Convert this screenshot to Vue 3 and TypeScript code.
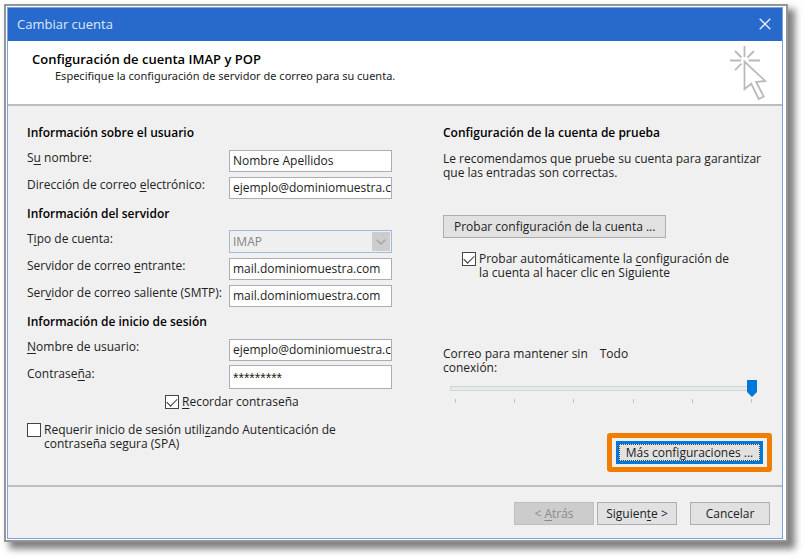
<script setup lang="ts">
import { ref } from 'vue'

const fullName = ref('Nombre Apellidos')
const email = ref('ejemplo@dominiomuestra.com')
const incoming = ref('mail.dominiomuestra.com')
const outgoing = ref('mail.dominiomuestra.com')
const userName = ref('ejemplo@dominiomuestra.com')
const password = ref('*********')
const remember = ref(true)
const requireSpa = ref(false)
const autoTest = ref(true)
const keepOffline = ref(5)
</script>

<template>
  <main class="frame">
    <form class="dialog" @submit.prevent>
      <header class="titlebar">
        <h1>Cambiar cuenta</h1>
        <button type="button" class="close" aria-label="Cerrar">
          <svg viewBox="0 0 12 12" width="12" height="12"><path d="M.7.7 11.3 11.3M11.3.7.7 11.3" fill="none" stroke="#e4ecf8" stroke-width="1.4" /></svg>
        </button>
      </header>

      <div class="banner">
        <div class="banner-text">
          <h2>Configuración de cuenta IMAP y POP</h2>
          <p>Especifique la configuración de servidor de correo para su cuenta.</p>
        </div>
        <svg class="pointer" viewBox="0 0 38 56" width="38" height="56" fill="none" stroke="#b9b9b9" stroke-width="1.8">
          <path d="M14.500 0v11M0 14.500h11M18.500 14.500h11.500M5 5l6.500 6.500M24 5l-6.500 6.500M5 24.200l6.500-6.500" />
          <path d="M14.500 15.500v27.700l6.700-5.500 7.500 15.300 5-2.500-7.500-14.500 9-1z" fill="#fff" />
        </svg>
      </div>

      <div class="content">
        <section class="fields">
          <h3>Información sobre el usuario</h3>
          <label for="name">S<u>u</u> nombre:</label>
          <input id="name" v-model="fullName" type="text" />
          <label for="email">Dirección de correo <u>e</u>lectrónico:</label>
          <input id="email" v-model="email" type="text" />

          <h3>Información del servidor</h3>
          <label for="kind">T<u>i</u>po de cuenta:</label>
          <div class="picker">
            <select id="kind" disabled><option>IMAP</option></select>
            <span class="arrow">
              <svg viewBox="0 0 10 6" width="10" height="6"><path d="M.7.7 5 5 9.300.7" fill="none" stroke="#a3a3a3" stroke-width="1.3" /></svg>
            </span>
          </div>
          <label for="incoming">Servidor de correo <u>e</u>ntrante:</label>
          <input id="incoming" v-model="incoming" type="text" />
          <label for="outgoing">Ser<u>v</u>idor de correo saliente (SMTP):</label>
          <input id="outgoing" v-model="outgoing" type="text" />

          <h3>Información de inicio de sesión</h3>
          <label for="user"><u>N</u>ombre de usuario:</label>
          <input id="user" v-model="userName" type="text" />
          <label for="password">Contrase<u>ñ</u>a:</label>
          <input id="password" v-model="password" class="secret" type="text" autocomplete="off" />

          <label class="check remember"><input v-model="remember" type="checkbox" /><span><u>R</u>ecordar contraseña</span></label>
          <label class="check spa"><input v-model="requireSpa" type="checkbox" /><span>Requerir inicio de sesión utili<u>z</u>ando Autenticación de<br />contraseña segura (SPA)</span></label>
        </section>

        <section class="test">
          <h3>Configuración de la cuenta de prueba</h3>
          <p>Le recomendamos que pruebe su cuenta para garantizar<br />que las entradas son correctas.</p>
          <button type="button" class="btn try">Probar confi<u>g</u>uración de la cuenta ...</button>
          <label class="check auto"><input v-model="autoTest" type="checkbox" /><span>Probar automáticamente la <u>c</u>onfiguración de<br />la cuenta al hacer clic en Siguiente</span></label>

          <div class="offline">
            <label for="offline">Correo para mantener sin<br />conexión:</label>
            <output for="offline">Todo</output>
          </div>
          <div class="slider">
            <input id="offline" v-model="keepOffline" type="range" min="0" max="5" />
            <div class="ticks"><i v-for="n in 6" :key="n"></i></div>
          </div>

          <div class="highlight">
            <button type="button" class="more">Más confi<u>g</u>uraciones ...</button>
          </div>
        </section>
      </div>

      <footer>
        <button type="button" class="btn" disabled>&lt; <u>A</u>trás</button>
        <button type="submit" class="btn">Siguien<u>t</u>e &gt;</button>
        <button type="button" class="btn cancel">Cancelar</button>
      </footer>
    </form>
  </main>
</template>

<style>
body {
  background: #fff;
}
</style>

<style scoped>
* {
  box-sizing: border-box;
}

.frame {
  margin: 4px 17px 17px 4px;
  padding: 1px 3px 1px 1px;
  border: 2px solid #959595;
  background: #fff;
  box-shadow: 6px 6px 7px 1px rgba(0, 0, 0, 0.5);
  font: 12px/14px 'Open Sans', 'Noto Sans', sans-serif;
  color: #222;
}

.dialog {
  border: 1px solid #7ba3e0;
  background: #f0f0f0;
}

h1,
h2,
h3,
p {
  margin: 0;
}

u {
  text-underline-offset: 2px;
}

button,
input,
select {
  font: inherit;
  color: inherit;
  border-radius: 0;
  margin: 0;
}

.titlebar {
  display: flex;
  align-items: center;
  justify-content: space-between;
  height: 33px;
  padding: 0 7px 2px 9px;
  background: #2869cc;
  color: #dfe9f8;
}

h1 {
  font-size: 13px;
  font-weight: 400;
}

.close {
  display: grid;
  place-items: center;
  width: 20px;
  height: 20px;
  padding: 0;
  border: 0;
  background: none;
}

.banner {
  display: flex;
  justify-content: space-between;
  height: 65px;
  padding: 5px 14px 0 24px;
  border-bottom: 2px solid #bdbdbd;
  background: #fff;
}

.banner-text {
  padding-top: 5px;
}

h2 {
  font-size: 13px;
  font-weight: 600;
  line-height: 17px;
  color: #000;
}

.banner p {
  padding-left: 23px;
  font-family: 'Noto Sans', 'Open Sans', sans-serif;
  font-size: 11px;
  line-height: 16px;
}

.content {
  display: grid;
  grid-template-columns: 416px 1fr;
  min-height: 381px;
  padding: 13px 10px 12px 19px;
  border-bottom: 2px solid #bdbdbd;
}

.fields {
  display: grid;
  grid-template-columns: 202px 163px;
  grid-auto-rows: 27px;
  align-items: center;
  align-content: start;
}

h3 {
  grid-column: 1 / -1;
  font-size: 12px;
  font-weight: 600;
  line-height: 27px;
  color: #000;
}

.fields > label {
  padding-bottom: 4px;
  white-space: nowrap;
}

.fields > input,
select {
  width: 100%;
  height: 22px;
  padding: 0 0 0 3px;
  border: 1px solid #abadb3;
  background: #fff;
}

.fields > input,
.picker {
  margin-top: 2px;
}

.fields > .secret {
  height: 24px;
  padding-top: 2px;
  font: 14px/16px 'Liberation Sans', sans-serif;
}

.picker {
  display: grid;
}

.picker > * {
  grid-area: 1 / 1;
}

select {
  height: 23px;
  border-color: #a3b9da;
  background: #efefef;
  color: #858585;
  appearance: none;
  opacity: 1;
}

.arrow {
  display: grid;
  place-items: center;
  justify-self: end;
  width: 18px;
  margin: 2px;
  background: #cdcdcd;
}

.check {
  display: flex;
  gap: 3px;
  align-items: flex-start;
}

.check input {
  flex: none;
  display: grid;
  place-items: center;
  width: 14px;
  height: 14px;
  border: 1px solid #444;
  background: #fff;
  appearance: none;
}

.check input:checked::before {
  content: '';
  width: 9px;
  height: 5px;
  margin-bottom: 2px;
  border: solid #333;
  border-width: 0 0 1px 1px;
  transform: rotate(-45deg);
}

.fields > .check {
  grid-column: 1 / -1;
  padding: 0;
}

.fields > .remember {
  padding: 0 0 2px 138px;
}

.fields > .spa {
  align-self: start;
  padding-top: 7px;
}

.btn {
  min-width: 80px;
  height: 23px;
  padding: 0 8px;
  border: 1px solid #adadad;
  background: #e1e1e1;
}

.btn:disabled {
  border-color: #bfbfbf;
  background: #cccccc;
  color: #8a8a8a;
}

.test p {
  padding-top: 6px;
}

.try {
  margin-top: 35px;
  padding: 0 10px;
}

.auto {
  margin: 14px 0 0 19px;
}

.offline {
  display: flex;
  gap: 12px;
  margin-top: 67px;
}

.slider {
  margin: 5px 15px 0 7px;
}

.slider input {
  display: block;
  width: 100%;
  height: 17px;
  background:
    linear-gradient(#e7eaea, #e7eaea) center / calc(100% - 2px) 3px no-repeat,
    linear-gradient(#d0d4d4, #d0d4d4) center / 100% 5px no-repeat;
  appearance: none;
}

.slider input::-webkit-slider-thumb {
  width: 10px;
  height: 17px;
  background: #0078d7;
  clip-path: polygon(0 0, 100% 0, 100% 70%, 50% 100%, 0 70%);
  appearance: none;
}

.ticks {
  display: flex;
  justify-content: space-between;
  padding: 2px 5px 0;
}

.ticks i {
  width: 1px;
  height: 4px;
  background: #c0c0c0;
}

.highlight {
  width: fit-content;
  margin: 30px 0 0 auto;
  padding: 3px 4px;
  border: 5px solid #f07d00;
  border-radius: 3px;
}

.more {
  display: block;
  width: 147px;
  height: 23px;
  padding: 0;
  border: 3px solid #0078d7;
  background: #e1e1e1;
  outline: 1px dotted #444;
  outline-offset: -4px;
}

footer {
  display: flex;
  justify-content: flex-end;
  gap: 3px;
  padding: 15px 12px 13px;
}

.cancel {
  margin-left: 10px;
}
</style>
